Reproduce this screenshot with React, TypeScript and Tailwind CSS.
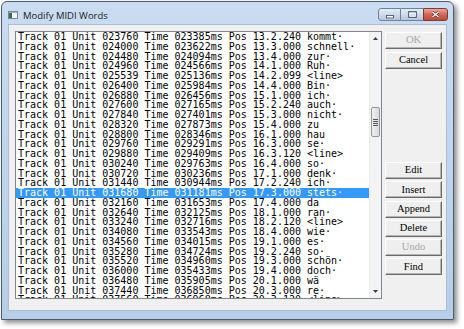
const rows: [string, string, string, string][] = [
  ['023760', '023385', '13.2.240', 'kommt·'],
  ['024000', '023622', '13.3.000', 'schnell·'],
  ['024480', '024094', '13.4.000', 'zur·'],
  ['024960', '024566', '14.1.000', 'Ruh·'],
  ['025539', '025136', '14.2.099', '<line>'],
  ['026400', '025984', '14.4.000', 'Bin·'],
  ['026880', '026456', '15.1.000', 'ich·'],
  ['027600', '027165', '15.2.240', 'auch·'],
  ['027840', '027401', '15.3.000', 'nicht·'],
  ['028320', '027873', '15.4.000', 'zu'],
  ['028800', '028346', '16.1.000', 'hau'],
  ['029760', '029291', '16.3.000', 'se·'],
  ['029880', '029409', '16.3.120', '<line>'],
  ['030240', '029763', '16.4.000', 'so·'],
  ['030720', '030236', '17.1.000', 'denk·'],
  ['031440', '030944', '17.2.240', 'ich·'],
  ['031680', '031181', '17.3.000', 'stets·'],
  ['032160', '031653', '17.4.000', 'da'],
  ['032640', '032125', '18.1.000', 'ran·'],
  ['033240', '032716', '18.2.120', '<line>'],
  ['034080', '033543', '18.4.000', 'wie·'],
  ['034560', '034015', '19.1.000', 'es·'],
  ['035280', '034724', '19.2.240', 'so·'],
  ['035520', '034960', '19.3.000', 'schön·'],
  ['036000', '035433', '19.4.000', 'doch·'],
  ['036480', '035905', '20.1.000', 'wä'],
  ['037440', '036850', '20.3.000', 're·'],
  ['037560', '036968', '20.3.120', '<line>'],
];

const SELECTED = 16;

function DlgButton({ label, disabled }: { label: string; disabled?: boolean }) {
  return (
    <button
      className={`h-[17px] w-[57px] flex items-center justify-center bg-[#efefef] border border-t-white border-l-white border-r-[#6a6a6a] border-b-[#6a6a6a] shadow-[inset_-1px_-1px_0_#b4b4b4] text-[10.5px] leading-none font-['Liberation_Serif',serif] ${
        disabled ? 'text-[#a6a6a6]' : 'text-black'
      }`}
    >
      {label}
    </button>
  );
}

export default function App() {
  return (
    <div className="w-[464px] h-[329px] bg-white overflow-hidden">
      <div className="ml-[1px] mt-[1px] w-[453px] h-[319px] flex flex-col border border-[#4b5b70] rounded-t-[6px] bg-gradient-to-b from-[#c9dcf1] to-[#b7cee8] shadow-[3px_3px_5px_rgba(0,0,0,0.45)]">
        {/* Title bar */}
        <div className="h-[22px] flex items-start pl-[6px] pr-[5px]">
          <svg width="10" height="8" viewBox="0 0 10 8" className="mt-[9px]">
            <rect x="0.5" y="0.5" width="9" height="7" fill="#f2f2f2" stroke="#7d8590" />
            <rect x="1" y="2" width="3" height="5" fill="#2f6f62" />
            <rect x="1" y="1" width="8" height="1" fill="#9fb3c8" />
          </svg>
          <span className="ml-[5px] mt-[8px] text-[9.5px] leading-[12px] text-[#1b1b1b] font-['Open_Sans',sans-serif]">
            Modify MIDI Words
          </span>
          <div className="ml-auto mt-[6px] flex">
            <div className="w-[23px] h-[13px] rounded-l-[3px] border border-[#6f819b] bg-gradient-to-b from-[#e4edf7] to-[#b5c8de] flex items-center justify-center">
              <svg width="8" height="4" viewBox="0 0 8 4" className="mt-[4px]">
                <rect x="0.5" y="0.5" width="7" height="2.5" fill="#fff" stroke="#3f4c5e" strokeWidth="0.8" />
              </svg>
            </div>
            <div className="w-[22px] h-[13px] border-y border-[#6f819b] bg-gradient-to-b from-[#e4edf7] to-[#b5c8de] flex items-center justify-center">
              <svg width="9" height="7" viewBox="0 0 9 7">
                <rect x="0.7" y="0.7" width="7.6" height="5.6" fill="none" stroke="#3f4c5e" strokeWidth="1" />
                <rect x="1.8" y="2.2" width="5.4" height="3" fill="none" stroke="#fff" strokeWidth="0.8" />
              </svg>
            </div>
            <div className="w-[25px] h-[13px] rounded-r-[3px] border border-[#7d3b35] bg-gradient-to-b from-[#e9a99d] via-[#d0675b] to-[#c04a3c] flex items-center justify-center">
              <svg width="9" height="7" viewBox="0 0 9 7">
                <path d="M1.5 1 L7.5 6 M7.5 1 L1.5 6" stroke="#5a1f1a" strokeWidth="2.6" />
                <path d="M1.5 1 L7.5 6 M7.5 1 L1.5 6" stroke="#fff" strokeWidth="1.5" />
              </svg>
            </div>
          </div>
        </div>

        {/* Client area */}
        <div className="flex-1 mx-[6px] mb-[8px] bg-[#f0f0f0] border border-[#a9bdd4] flex pl-[6px] pt-[6px] gap-[3px]">
          {/* List box */}
          <div className="w-[367px] h-[268px] bg-white border border-[#7f868f] flex overflow-hidden">
            <div className="flex-1 overflow-hidden font-['DejaVu_Sans_Mono',monospace] text-[10px] leading-[9.75px] whitespace-pre">
              {rows.map((r, i) => (
                <div
                  key={r[0]}
                  className={`h-[9.75px] pl-[2px] ${i === SELECTED ? 'bg-[#3399ff] text-white' : 'text-black'}`}
                >
                  {`Track 01 Unit ${r[0]} Time ${r[1]}ms Pos ${r[2]} ${r[3]}`}
                </div>
              ))}
            </div>
            {/* Scrollbar */}
            <div className="w-[12px] flex flex-col bg-[#f3f3f3] border-l border-[#ececec]">
              <div className="h-[13px] flex items-center justify-center">
                <svg width="5" height="3" viewBox="0 0 5 3">
                  <path d="M0 3 L2.5 0 L5 3 Z" fill="#3d3d3d" />
                </svg>
              </div>
              <div className="h-[62px]" />
              <div className="h-[30px] mx-[1px] border border-[#959595] rounded-[2px] bg-gradient-to-r from-[#f1f1f1] to-[#d9d9d9] flex flex-col items-center justify-center gap-[1px]">
                <div className="w-[5px] h-[1px] bg-[#555]" />
                <div className="w-[5px] h-[1px] bg-[#555]" />
                <div className="w-[5px] h-[1px] bg-[#555]" />
                <div className="w-[5px] h-[1px] bg-[#555]" />
              </div>
              <div className="flex-1" />
              <div className="h-[13px] flex items-center justify-center">
                <svg width="5" height="3" viewBox="0 0 5 3">
                  <path d="M0 0 L5 0 L2.5 3 Z" fill="#3d3d3d" />
                </svg>
              </div>
            </div>
          </div>

          {/* Buttons */}
          <div className="flex flex-col pt-[1px]">
            <div className="flex flex-col gap-[3px]">
              <DlgButton label="OK" disabled />
              <DlgButton label="Cancel" />
            </div>
            <div className="mt-[93px] flex flex-col gap-[2.3px]">
              <DlgButton label="Edit" />
              <DlgButton label="Insert" />
              <DlgButton label="Append" />
              <DlgButton label="Delete" />
              <DlgButton label="Undo" disabled />
              <DlgButton label="Find" />
            </div>
          </div>
        </div>
      </div>
    </div>
  );
}
